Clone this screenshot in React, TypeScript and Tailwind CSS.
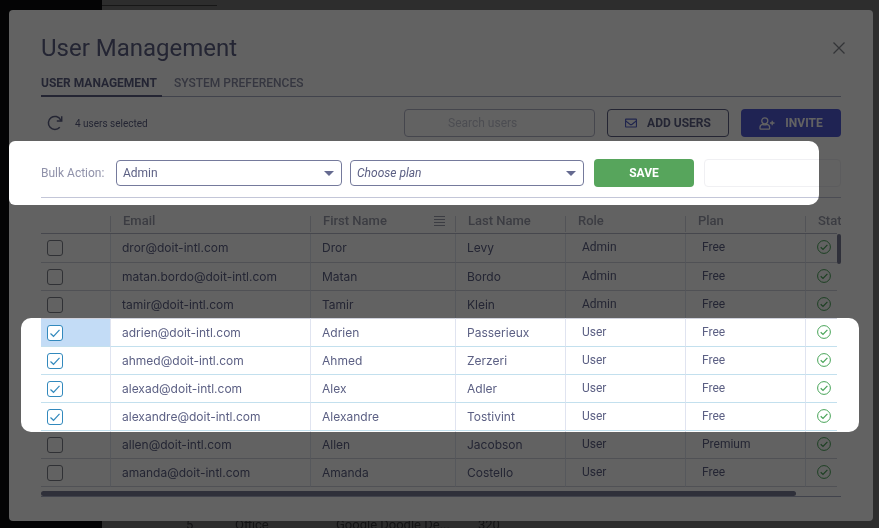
import { FaRegEnvelope } from "react-icons/fa";

type User = {
  email: string;
  first: string;
  last: string;
  role: string;
  plan: string;
  selected?: boolean;
};

const users: User[] = [
  { email: "dror@doit-intl.com", first: "Dror", last: "Levy", role: "Admin", plan: "Free" },
  { email: "matan.bordo@doit-intl.com", first: "Matan", last: "Bordo", role: "Admin", plan: "Free" },
  { email: "tamir@doit-intl.com", first: "Tamir", last: "Klein", role: "Admin", plan: "Free" },
  { email: "adrien@doit-intl.com", first: "Adrien", last: "Passerieux", role: "User", plan: "Free", selected: true },
  { email: "ahmed@doit-intl.com", first: "Ahmed", last: "Zerzeri", role: "User", plan: "Free", selected: true },
  { email: "alexad@doit-intl.com", first: "Alex", last: "Adler", role: "User", plan: "Free", selected: true },
  { email: "alexandre@doit-intl.com", first: "Alexandre", last: "Tostivint", role: "User", plan: "Free", selected: true },
  { email: "allen@doit-intl.com", first: "Allen", last: "Jacobson", role: "User", plan: "Premium" },
  { email: "amanda@doit-intl.com", first: "Amanda", last: "Costello", role: "User", plan: "Free" },
];

function RefreshIcon() {
  return (
    <svg viewBox="0 0 16 16" className="size-4" fill="none" stroke="currentColor" strokeWidth="1.5">
      <path d="M12.8 12.2A6.500 6.500 0 1 1 13.600 4.800L14.400 6" />
      <path d="M14.700 1.200V6H9.800" />
    </svg>
  );
}

function InviteIcon() {
  return (
    <svg viewBox="0 0 16 13" className="h-[13px] w-4" fill="none" stroke="currentColor" strokeWidth="1.3">
      <circle cx="5.8" cy="3.8" r="3" />
      <path d="M3.6 7.4C1.9 7.7 1 8.8 1 10.3v1.1c0 .5.3.8.8.8h8c.5 0 .8-.3.8-.8v-1.1c0-1.500-.9-2.600-2.600-2.900-1.400.7-3 .7-4.400 0Z" />
      <path d="M13.200 3.700v4.600M10.900 6h4.600" />
    </svg>
  );
}

function StatusIcon() {
  return (
    <svg viewBox="0 0 14 14" className="size-[14px] text-[#48a458]" fill="none" stroke="currentColor">
      <title>Active</title>
      <circle cx="7" cy="7" r="6.400" />
      <path d="M3.700 7.300 6 9.500l4.400-4.700" strokeWidth="1.200" />
    </svg>
  );
}

function MenuLines() {
  return (
    <svg viewBox="0 0 11 10" className="h-[10px] w-[11px]" stroke="currentColor" strokeWidth="1">
      <path d="M0 .5h11M0 3.500h11M0 6.500h11M0 9.500h11" />
    </svg>
  );
}

function Select({ label, options, className }: { label: string; options: string[]; className: string }) {
  return (
    <div className={`relative ${className}`}>
      <select
        aria-label={label}
        className="h-[26px] w-full appearance-none rounded border border-[#757a9c] bg-white pl-[6px] pr-6 text-[12px] text-[#5c6084] [font-style:inherit]"
      >
        {options.map((o) => (
          <option key={o}>{o}</option>
        ))}
      </select>
      <svg viewBox="0 0 10 5" className="pointer-events-none absolute right-2 top-[11px] h-[5px] w-[10px] fill-[#656a90]">
        <path d="M0 0h10L5 5Z" />
      </svg>
    </div>
  );
}

function HeaderCell({ name, menu }: { name: string; menu?: boolean }) {
  return (
    <th className="h-9 border-b border-[#b5b8c9] p-0 pb-px text-left align-bottom text-[13px] font-medium">
      <div
        className={`flex h-4 items-center justify-between whitespace-nowrap pb-[6px] pl-3 pr-2.5 ${
          name === "Stat" ? "" : "border-r border-[#d5d7e2]"
        }`}
      >
        {name}
        {menu && <MenuLines />}
      </div>
    </th>
  );
}

function Row({ user, active }: { user: User; active: boolean }) {
  const line = user.selected ? "border-b-[#c3e0ee]" : "border-b-[#cfd1dc]";
  const cell = `border-b ${line} py-0 pr-0`;
  const side = "border-r border-r-[#e0e4f0]";
  return (
    <tr className="h-7 first:h-[29px]">
      <td className={`${cell} ${side} pl-[6px] ${active ? "bg-[#c3dcf6]" : ""}`}>
        <label className="relative block size-4">
          <input
            type="checkbox"
            aria-label={`Select ${user.email}`}
            defaultChecked={user.selected}
            className="peer block size-4 appearance-none rounded-[3px] border border-[#7d7f88] bg-white checked:border-[#3289bd]"
          />
          <svg
            viewBox="0 0 16 16"
            fill="none"
            className="pointer-events-none absolute inset-0 hidden size-4 stroke-[#3289bd] peer-checked:block"
          >
            <path d="m3.500 8.500 3 2.800 6-6.500" strokeWidth="1.200" />
          </svg>
        </label>
      </td>
      <td className={`${cell} ${side} pl-[11px] font-[Inter,sans-serif]`}>{user.email}</td>
      <td className={`${cell} ${side} pl-[11px] font-[Inter,sans-serif]`}>{user.first}</td>
      <td className={`${cell} ${side} pl-[11px] font-[Inter,sans-serif]`}>{user.last}</td>
      <td className={`${cell} ${side} pb-0.5 pl-4`}>{user.role}</td>
      <td className={`${cell} ${side} pb-0.5 pl-4`}>{user.plan}</td>
      <td className={`${cell} pb-0.5 pl-[11px]`}>
        <StatusIcon />
      </td>
    </tr>
  );
}

export default function App() {
  return (
    <div className="relative isolate flex min-h-screen flex-col bg-[#747474] font-[Roboto,sans-serif] text-[12px] text-[#5c6084]">
      {/* The dashboard behind the dialog */}
      <div className="absolute inset-0 -z-10 flex overflow-hidden">
        <div className="w-[102px] shrink-0 bg-[#08080c]" />
        <div className="flex flex-1 flex-col justify-between">
          <div className="h-[6px] w-[115px] border-b border-[#3c3c3c]" />
          <div className="-mb-0.5 flex pl-[84px] text-[13px] leading-none text-[#303034]">
            <span className="w-[49px]">5</span>
            <span className="w-[101px]">Office</span>
            <span className="w-[142px]">Google Doodle De...</span>
            <span>320</span>
          </div>
        </div>
      </div>

      <main className="mb-2 ml-[9px] mr-[6px] mt-[10px] rounded bg-white px-8 pb-6 pt-6">
        <header className="flex items-center justify-between">
          <h1 className="text-2xl leading-7">User Management</h1>
          <button aria-label="Close" className="mr-[-4px] flex size-3 text-[#85878f]">
            <svg viewBox="0 0 12 12" className="size-3" stroke="currentColor" strokeWidth="1.300">
              <path d="m.5.5 11 11M11.500.5l-11 11" />
            </svg>
          </button>
        </header>

        <nav className="mt-2 flex h-[27px] gap-3 border-b border-[#a9adc4] font-medium">
          <a href="#users" className="-mb-px w-[121px] border-b-2 border-[#5c6084] pt-1 font-bold">USER MANAGEMENT</a>
          <a href="#preferences" className="pt-1 text-[#8a8da5]">SYSTEM PREFERENCES</a>
        </nav>

        <div className="mt-3 flex h-7 items-center">
          <button aria-label="Refresh" className="ml-[6px] mr-3"><RefreshIcon /></button>
          <span className="text-[10px]">4 users selected</span>
          <input
            aria-label="Search users"
            placeholder="Search users"
            className="ml-auto h-7 w-[191px] rounded border border-[#b3b6c9] bg-white pl-[43px] placeholder:text-[#c6c8d4]"
          />
          <button className="ml-3 flex h-7 w-[122px] items-center justify-center gap-2.5 rounded border border-[#5c6084] font-bold">
            <FaRegEnvelope className="text-[#5260c8]" />
            ADD USERS
          </button>
          <button className="ml-3 flex h-7 w-[100px] items-center justify-center gap-2.5 rounded bg-[#5059d8] font-bold text-white">
            <InviteIcon />
            INVITE
          </button>
        </div>

        <div className="mt-[22px] flex items-center border-b border-[#c3c6d8] pb-2.5">
          <span className="w-[75px] text-[#9092aa]">Bulk Action:</span>
          <Select label="Role" options={["Admin", "User"]} className="w-[226px]" />
          <Select label="Plan" options={["Choose plan", "Free", "Premium"]} className="ml-2 w-[234px] italic" />
          <button className="ml-2.5 h-7 w-[100px] rounded bg-[#57a55c] font-bold text-white">SAVE</button>
          <input aria-label="Value" className="ml-2.5 h-7 min-w-0 flex-1 rounded border border-[#f0f0f3] bg-white" />
        </div>

        <div className="relative overflow-hidden border-b border-[#a9adc4]">
          <div className="pb-1 pr-1">
            <table className="w-full table-fixed border-separate border-spacing-0">
              <colgroup>
                <col className="w-[70px]" />
                <col className="w-[200px]" />
                <col className="w-[145px]" />
                <col className="w-[110px]" />
                <col className="w-[120px]" />
                <col className="w-[120px]" />
                <col />
              </colgroup>
              <thead className="text-[#9a9cab]">
                <tr>
                  <HeaderCell name="" />
                  <HeaderCell name="Email" />
                  <HeaderCell name="First Name" menu />
                  <HeaderCell name="Last Name" />
                  <HeaderCell name="Role" />
                  <HeaderCell name="Plan" />
                  <HeaderCell name="Stat" />
                </tr>
              </thead>
              <tbody>
                {users.map((user, i) => (
                  <Row key={user.email} user={user} active={i === 3} />
                ))}
              </tbody>
            </table>
          </div>
          <div className="h-[5px] w-[755px] rounded-full bg-[#7a7c96]" />
          <div className="absolute right-0 top-9 h-[30px] w-1 rounded-full bg-[#7a7c96]" />
        </div>
      </main>

      {/* Dimming layer: white areas stay fully lit */}
      <div className="pointer-events-none absolute inset-0 bg-[#626262] mix-blend-multiply">
        <div className="absolute left-[9px] right-[60px] top-[141px] h-16 rounded-l-md rounded-r-[10px] bg-white" />
        <div className="absolute left-[21px] right-5 top-[318px] h-[114px] rounded-[10px] bg-white" />
      </div>
    </div>
  );
}
